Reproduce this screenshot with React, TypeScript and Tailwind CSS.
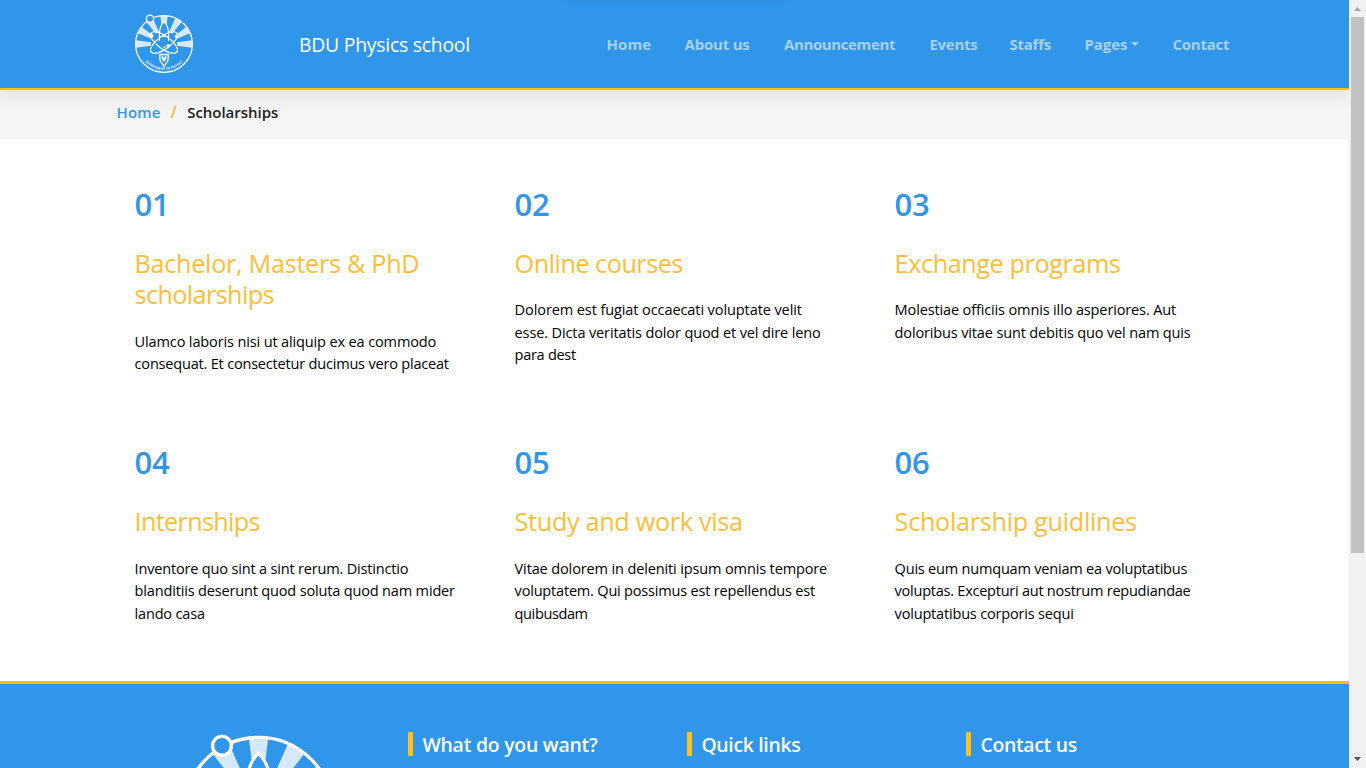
type Line = [text: string, tracking: string];

interface Program {
  no: string;
  title: Line[];
  body: Line[];
}

const programs: Program[] = [
  {
    no: '01',
    title: [
      ['Bachelor, Masters & PhD', 'tracking-[-0.28px]'],
      ['scholarships', 'tracking-[-0.6px]'],
    ],
    body: [
      ['Ulamco laboris nisi ut aliquip ex ea commodo', 'tracking-[-0.15px]'],
      ['consequat. Et consectetur ducimus vero placeat', 'tracking-[-0.21px]'],
    ],
  },
  {
    no: '02',
    title: [['Online courses', 'tracking-[-0.48px]']],
    body: [
      ['Dolorem est fugiat occaecati voluptate velit', 'tracking-[-0.11px]'],
      ['esse. Dicta veritatis dolor quod et vel dire leno', 'tracking-[-0.14px]'],
      ['para dest', 'tracking-[-0.3px]'],
    ],
  },
  {
    no: '03',
    title: [['Exchange programs', 'tracking-[-0.4px]']],
    body: [
      ['Molestiae officiis omnis illo asperiores. Aut', 'tracking-[-0.15px]'],
      ['doloribus vitae sunt debitis quo vel nam quis', 'tracking-[-0.16px]'],
    ],
  },
  {
    no: '04',
    title: [['Internships', 'tracking-[-0.66px]']],
    body: [
      ['Inventore quo sint a sint rerum. Distinctio', 'tracking-[-0.19px]'],
      ['blanditiis deserunt quod soluta quod nam mider', 'tracking-[-0.18px]'],
      ['lando casa', 'tracking-[-0.2px]'],
    ],
  },
  {
    no: '05',
    title: [['Study and work visa', 'tracking-[-0.31px]']],
    body: [
      ['Vitae dolorem in deleniti ipsum omnis tempore', 'tracking-[-0.15px]'],
      ['voluptatem. Qui possimus est repellendus est', 'tracking-[-0.21px]'],
      ['quibusdam', 'tracking-[-0.4px]'],
    ],
  },
  {
    no: '06',
    title: [['Scholarship guidlines', 'tracking-[-0.28px]']],
    body: [
      ['Quis eum numquam veniam ea voluptatibus', 'tracking-[-0.22px]'],
      ['voluptas. Excepturi aut nostrum repudiandae', 'tracking-[-0.26px]'],
      ['voluptatibus corporis sequi', 'tracking-[-0.2px]'],
    ],
  },
];

const navItems = [
  { label: 'Home', cls: 'w-[78px] tracking-[0.1px]' },
  { label: 'About us', cls: 'w-[99.5px] tracking-[-0.2px]' },
  { label: 'Announcement', cls: 'w-[145.5px] tracking-[-0.38px]' },
  { label: 'Events', cls: 'w-[80px] tracking-[-0.3px]' },
  { label: 'Staffs', cls: 'w-[75px] tracking-[-0.25px]' },
  { label: 'Pages', cls: 'w-[88px] tracking-[-0.1px]', caret: true },
  { label: 'Contact', cls: 'tracking-[-0.25px]' },
];

function Logo({ className, motto }: { className: string; motto?: string }) {
  return (
    <svg viewBox="-32 -32 64 64" className={className} fill="none" stroke="#fff">
      <g fill="#d6e9fa" stroke="none">
        {[-90, -60, -31, 0, 31, 60, 90].map((a) => (
          <path key={a} d="M-1.8 -13L-3.7 -28L3.7 -28L1.8 -13Z" transform={`rotate(${a})`} />
        ))}
      </g>
      <circle r="28.4" strokeWidth="1.3" />
      <circle cx="-14" cy="-25.2" r="3.6" fill="#2f96ea" strokeWidth="1.3" />
      <path
        d="M0 -22.3C3 -19.5 4.6 -15.5 4.6 -9V10.5H-4.6V-9C-4.6 -15.5 -3 -19.5 0 -22.3Z"
        fill="#2f96ea"
        stroke="none"
      />
      <path
        d="M-4.6 -3V-9C-4.6 -15.5 -3 -19.5 0 -22.3C3 -19.5 4.6 -15.5 4.6 -9V-3"
        strokeWidth="1.2"
      />
      <path d="M-4.4 -7.5H4.4" strokeWidth="0.8" />
      <path d="M-4.4 10.5H4.4L4 16.5L0 22.3L-4 16.5Z" fill="#2f96ea" strokeWidth="1.3" />
      <path d="M-2.4 11V14.5L0 18L2.4 14.5V11L0 14Z" fill="#fff" stroke="none" />
      <ellipse rx="16" ry="6.4" transform="translate(0 -1.5) rotate(36)" strokeWidth="1.2" />
      <ellipse rx="16" ry="6.4" transform="translate(0 -1.5) rotate(-36)" strokeWidth="1.2" />
      <g fill="#fff" stroke="none">
        <circle cx="-12.6" cy="-8.8" r="1.7" />
        <circle cx="4.2" cy="1.8" r="1.8" />
        <circle cx="0.5" cy="3" r="1" />
      </g>
      {motto && (
        <>
          <path id="motto-arc" d="M-19.6 17A26 26 0 0 0 19.6 17" stroke="none" />
          <text fill="#fff" stroke="none" fontSize="3.4" fontWeight="600" fontFamily="Open Sans" textAnchor="middle">
            <textPath href="#motto-arc" startOffset="50%">
              {motto}
            </textPath>
          </text>
        </>
      )}
    </svg>
  );
}

function Lines({ lines }: { lines: Line[] }) {
  return (
    <>
      {lines.map(([text, tracking]) => (
        <span key={text} className={`block whitespace-nowrap ${tracking}`}>
          {text}
        </span>
      ))}
    </>
  );
}

function Header() {
  return (
    <header className="relative z-10 flex h-[90px] shrink-0 items-start border-b-2 border-[#fdc01c] bg-[#2f96ea] pl-[132px] shadow-[0_8px_16px_rgba(0,0,0,0.08)]">
      <div className="absolute left-1/2 -top-2 h-2 w-[220px] -translate-x-1/2 shadow-[0_0_8px_rgba(0,0,0,0.06)]" />
      <Logo className="mt-[12.2px] h-16 w-16 shrink-0" motto="DEPARTMENT OF PHYSICS" />
      <div className="ml-[103px] mt-[30px] w-[307.5px] text-[19.4px] leading-[30px] tracking-[-0.25px] text-white">
        BDU Physics school
      </div>
      <nav className="mt-[34px] flex text-[15px] font-bold leading-5 text-[#a6d1f6]">
        {navItems.map((n) => (
          <a key={n.label} className={`flex items-center whitespace-nowrap ${n.cls}`}>
            {n.label}
            {n.caret && (
              <i className="ml-1 border-x-4 border-t-4 border-x-transparent border-t-[#a6d1f6]" />
            )}
          </a>
        ))}
      </nav>
    </header>
  );
}

function Footer() {
  const cols = [
    { label: 'What do you want?', cls: 'tracking-[-0.22px]' },
    { label: 'Quick links', cls: 'tracking-[-0.32px]' },
    { label: 'Contact us', cls: 'tracking-[-0.3px]' },
  ];
  return (
    <footer className="flex h-[220px] shrink-0 items-start border-t-[3px] border-[#fdc01c] bg-[#2f96ea] pl-[174.5px]">
      <Logo className="mt-[44.3px] h-[167px] w-[167px] shrink-0" />
      <div className="ml-[66.5px] mt-12 flex">
        {cols.map((c) => (
          <h4
            key={c.label}
            className="flex w-[279px] whitespace-nowrap text-[19.4px] font-semibold leading-[26px] text-white"
          >
            <span className={`block h-6 border-l-[5px] border-[#fdc01c] pl-[9.4px] ${c.cls}`}>{c.label}</span>
          </h4>
        ))}
      </div>
    </footer>
  );
}

function Scrollbar() {
  return (
    <aside className="flex h-full w-[17px] shrink-0 flex-col items-center justify-between bg-[#f1f1f1]">
      <div className="flex flex-col items-center">
        <svg className="h-[17px] w-[17px]" viewBox="0 0 17 17">
          <path d="M5 11L8.5 7L12 11Z" fill="#a3a3a3" />
        </svg>
        <div className="h-[536px] w-[13px] bg-[#c1c1c1]" />
      </div>
      <svg className="h-[17px] w-[17px]" viewBox="0 0 17 17">
        <path d="M5 6L8.5 10L12 6Z" fill="#505050" />
      </svg>
    </aside>
  );
}

export default function App() {
  return (
    <div className="flex h-[768px] w-[1366px] overflow-hidden bg-white font-['Open_Sans',sans-serif]">
      <div className="flex w-[1349px] shrink-0 flex-col overflow-hidden">
        <Header />
        <div className="flex h-[49px] shrink-0 bg-[#f5f5f5] pl-[116.5px] pt-[12px] text-[15px] font-semibold leading-5">
          <a className="w-[54px] tracking-[0.2px] text-[#2f96ea]">Home</a>
          <span className="w-[16.7px] text-[16px] text-[#fdbb2c]">/</span>
          <span className="tracking-[-0.03px] text-[#212121]">Scholarships</span>
        </div>
        <main className="grid h-[542px] shrink-0 auto-rows-[258.4px] grid-cols-[380px_380px_380px] pl-[134.6px] pt-[46px]">
          {programs.map((p) => (
            <article key={p.no}>
              <h3 className="text-[31px] font-semibold leading-[38px] tracking-[-0.4px] text-[#2f96ea]">{p.no}</h3>
              <h2 className="mt-[25px] text-[25.2px] leading-[31.2px] text-[#fdbe37]">
                <Lines lines={p.title} />
              </h2>
              <p className="mt-[19.1px] text-[14.55px] leading-[22.5px] text-black">
                <Lines lines={p.body} />
              </p>
            </article>
          ))}
        </main>
        <Footer />
      </div>
      <Scrollbar />
    </div>
  );
}
